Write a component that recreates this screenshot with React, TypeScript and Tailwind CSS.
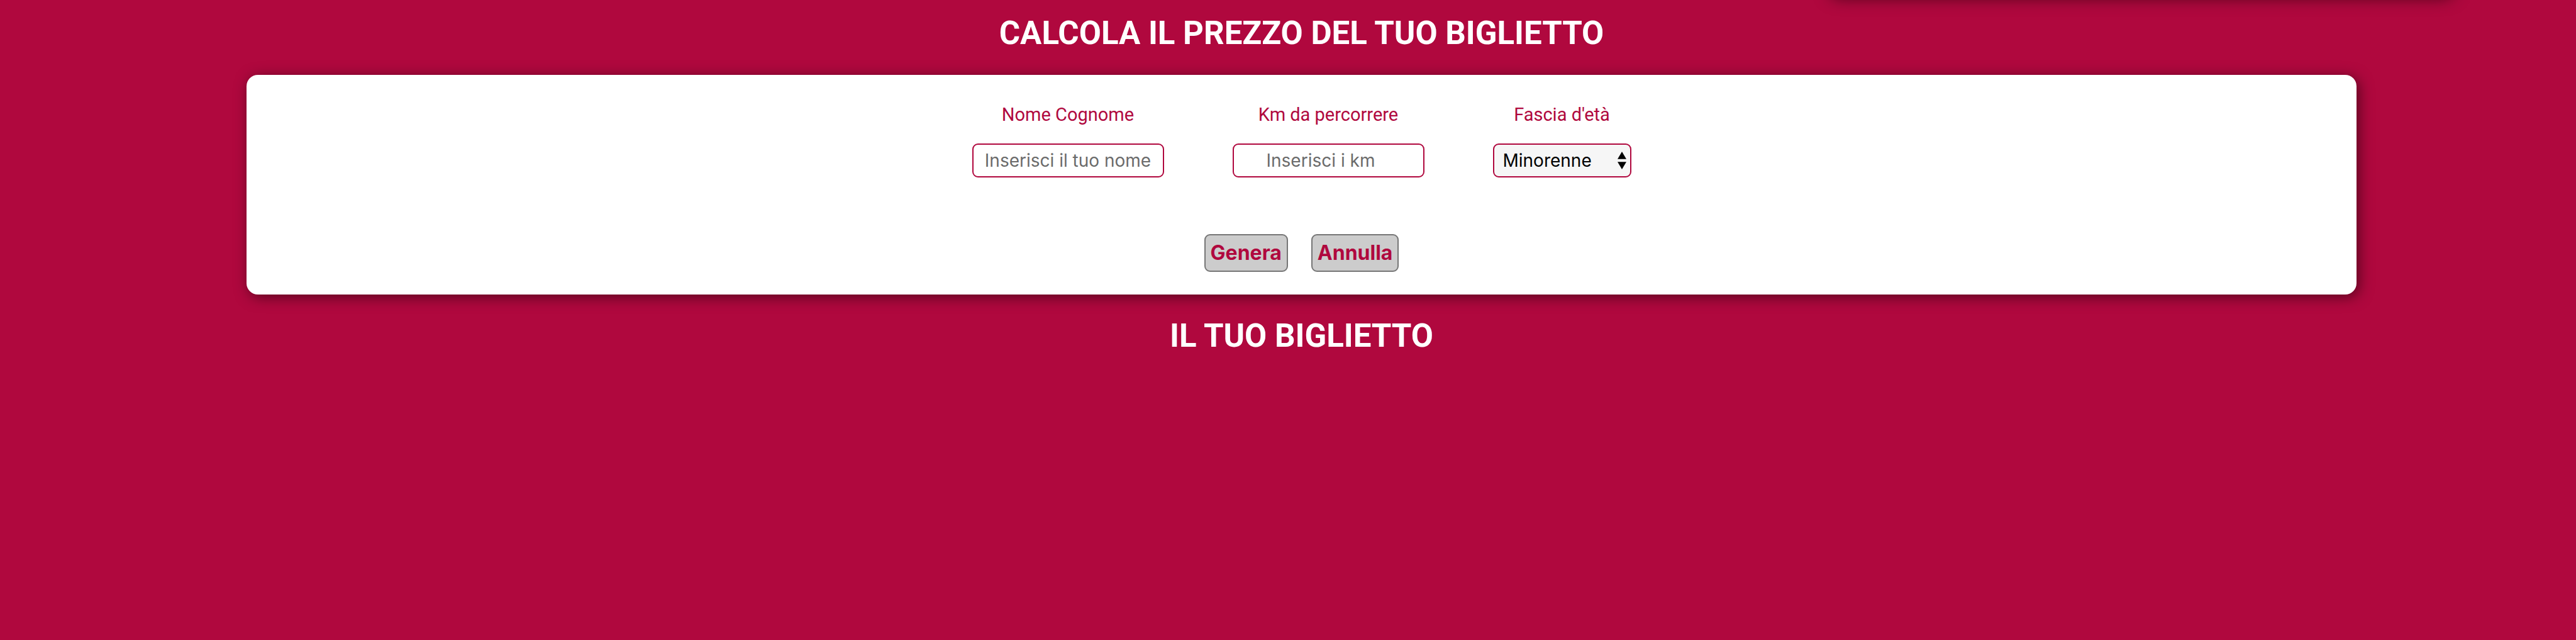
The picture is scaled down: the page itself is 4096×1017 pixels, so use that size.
import type { ReactNode } from "react";

const shadow = "shadow-[4px_4px_22px_rgba(0,0,0,0.5)]";

function Field({ id, label, children }: { id: string; label: string; children: ReactNode }) {
  return (
    <div className="flex flex-col items-center gap-[28px]">
      <label htmlFor={id} className="text-[29px] leading-[36px] text-[#b0083e]">
        {label}
      </label>
      {children}
    </div>
  );
}

const inputClass =
  "h-[54px] w-[305px] rounded-[9px] border-2 border-[#b0083e] bg-white text-center font-['Inter',sans-serif] text-[28px] text-black placeholder:text-[#6b6b6b] placeholder:opacity-100 outline-none";

const buttonClass =
  "h-[60px] rounded-[9px] border-2 border-[#767676] bg-[#cccccc] px-[8px] font-['Inter',sans-serif] text-[32px] font-bold text-[#b0083e]";

const headingClass = "text-center text-[51px] leading-[64px] font-bold text-white";

export default function App() {
  return (
    <div className="relative min-h-screen overflow-hidden bg-[#b0083e] pl-[43px] font-['Roboto',sans-serif]">
      <div
        aria-hidden="true"
        className="absolute -top-[102px] left-[70.9%] h-24 w-[24.3%] rounded-[18px] shadow-[4px_4px_24px_rgba(0,0,0,0.5)]"
      />
      <h1 className={`pt-[21px] ${headingClass}`}>CALCOLA IL PREZZO DEL TUO BIGLIETTO</h1>
      <form
        onSubmit={(e) => e.preventDefault()}
        className={`mx-auto mt-[34px] flex w-[82.8%] flex-col items-center rounded-[18px] bg-white pt-[45px] pb-[36px] ${shadow}`}
      >
        <div className="flex gap-[109px]">
          <Field id="name" label="Nome Cognome">
            <input id="name" type="text" placeholder="Inserisci il tuo nome" className={inputClass} />
          </Field>
          <Field id="km" label="Km da percorrere">
            <input id="km" type="text" inputMode="numeric" placeholder="Inserisci i km" className={`${inputClass} pr-[24px]`} />
          </Field>
          <Field id="age" label="Fascia d'età">
            <div className="relative">
              <select
                id="age"
                className="block h-[54px] w-[220px] appearance-none rounded-[9px] border-2 border-[#b0083e] bg-[#f6f6f6] pl-[14px] font-['Inter',sans-serif] text-[28px] text-black"
              >
                <option>Minorenne</option>
                <option>Maggiorenne</option>
                <option>Over 65</option>
              </select>
              <svg
                aria-hidden="true"
                viewBox="0 0 14 28"
                className="pointer-events-none absolute top-[13px] right-[8px] h-[28px] w-[14px]"
              >
                <path d="M7 0L14 11.8H0ZM7 28L0 16.2H14Z" fill="#000" />
              </svg>
            </div>
          </Field>
        </div>
        <div className="mt-[90px] flex gap-[37px]">
          <button type="submit" className={buttonClass}>Genera</button>
          <button type="reset" className={buttonClass}>Annulla</button>
        </div>
      </form>
      <h2 className={`mt-[34px] ${headingClass}`}>IL TUO BIGLIETTO</h2>
    </div>
  );
}
